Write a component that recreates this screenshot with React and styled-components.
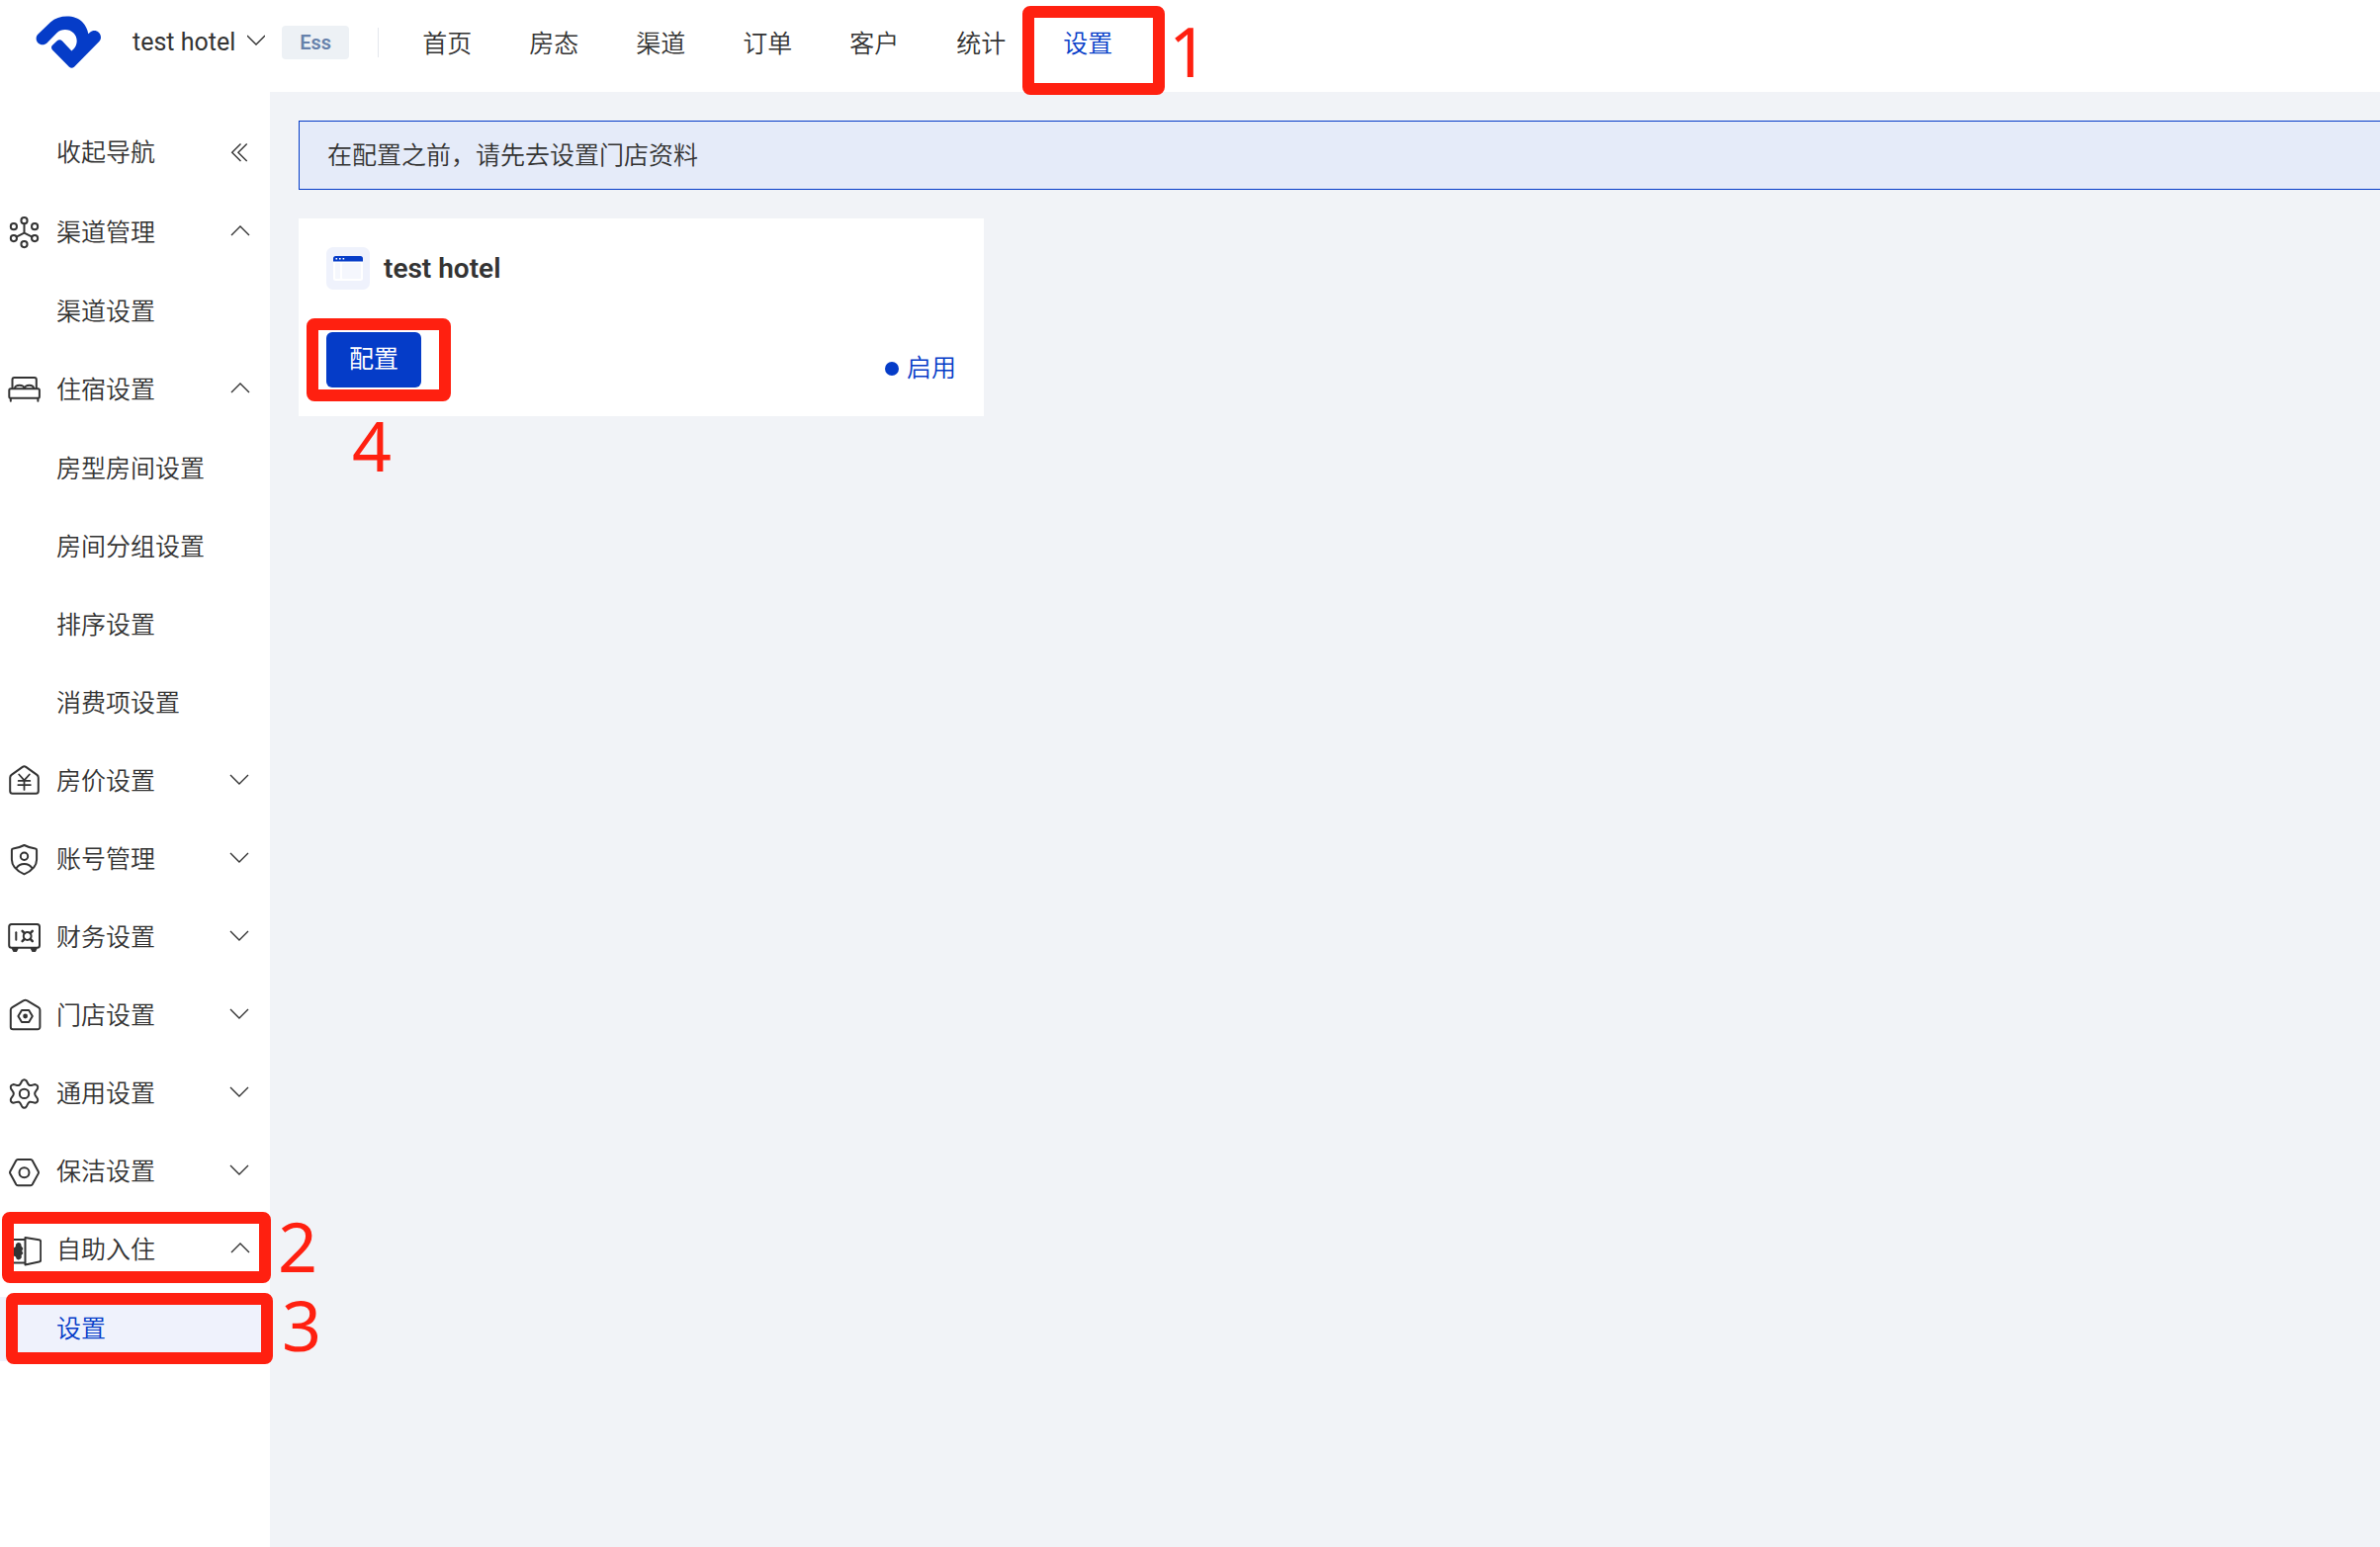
import React from "react";
import styled, { createGlobalStyle, css } from "styled-components";

const colors = {
  blue: "#053cc8",
  text: "#333333",
  red: "#ff2010",
  page: "#f1f3f7",
  active: "#eff2fc",
};

const GlobalStyle = createGlobalStyle`
  *, *::before, *::after {
    box-sizing: border-box;
  }

  body {
    margin: 0;
    background: ${colors.page};
    color: ${colors.text};
    font-family: Roboto, "Noto Sans CJK SC", sans-serif;
    font-size: 25px;
    font-weight: 400;
    line-height: 38px;
  }

  button {
    padding: 0;
    border: 0;
    background: none;
    color: inherit;
    font: inherit;
    cursor: pointer;
  }

  a {
    color: inherit;
    text-decoration: none;
  }

  svg {
    display: block;
    flex: none;
  }
`;

const Page = styled.div`
  position: relative;
  display: flex;
  flex-direction: column;
  min-height: 100vh;
  overflow-x: hidden;
`;

const Header = styled.header`
  display: flex;
  align-items: center;
  height: 93px;
  padding: 0 36px 8px;
  background: #fff;
`;

const HotelSelect = styled.button`
  display: flex;
  align-items: center;
  gap: 12px;
  margin-left: 32px;
  white-space: nowrap;
`;

const Badge = styled.span`
  margin-left: 17px;
  padding: 0 18px;
  border-radius: 4px;
  background: #edf1f5;
  color: #6681ab;
  font-size: 20px;
  font-weight: 600;
  line-height: 34px;
`;

const Divider = styled.span`
  width: 1px;
  height: 30px;
  margin: 0 44px 0 29px;
  background: #e4e7ec;
`;

const TopNav = styled.nav`
  display: flex;
  gap: 58px;
  padding-top: 4px;
`;

const TopLink = styled.a`
  color: ${(props) => (props.$active ? colors.blue : colors.text)};
  font-weight: 350;
  white-space: nowrap;
`;

const Body = styled.div`
  display: flex;
  flex: 1;
`;

const Sidebar = styled.nav`
  flex: none;
  width: 273px;
  padding-top: 29px;
  background: #fff;
  font-weight: 350;
`;

const rowStyle = css`
  display: flex;
  align-items: center;
  width: 100%;
  height: 65px;
  padding-right: 19px;
  text-align: left;
  white-space: nowrap;
`;

const CollapseRow = styled.button`
  ${rowStyle}
  justify-content: space-between;
  margin-bottom: 16px;
  padding-left: 57px;
`;

const Menu = styled.ul`
  display: flex;
  flex-direction: column;
  gap: 14px;
  margin: 0;
  padding: 0;
  list-style: none;
`;

const SubMenu = styled(Menu)`
  padding-top: 15px;
`;

const GroupRow = styled.button`
  ${rowStyle}
  gap: 15px;
  padding-left: 6px;
`;

const GroupLabel = styled.span`
  flex: 1;
`;

const SubLink = styled.a`
  ${rowStyle}
  padding-left: 57px;
  background: ${(props) => (props.$active ? colors.active : "transparent")};
  color: ${(props) => (props.$active ? colors.blue : colors.text)};
`;

const Main = styled.main`
  flex: 1;
  min-width: 0;
  padding: 29px 0 29px 29px;
`;

const Notice = styled.p`
  margin: 0 0 29px;
  padding: 16px 28px 14px;
  border: 1px solid ${colors.blue};
  border-right: 0;
  background: #e5ebf9;
  font-weight: 350;
`;

const CardGrid = styled.div`
  display: grid;
  grid-template-columns: repeat(3, 1fr);
  gap: 13px;
`;

const Card = styled.article`
  display: flex;
  flex-direction: column;
  justify-content: space-between;
  height: 200px;
  padding: 29px 28px;
  background: #fff;
`;

const CardHead = styled.div`
  display: flex;
  align-items: center;
  gap: 14px;
`;

const CardIcon = styled.span`
  display: grid;
  place-items: center;
  width: 44px;
  height: 43px;
  border-radius: 7px;
  background: ${colors.active};
`;

const CardTitle = styled.h2`
  margin: 0;
  font-size: 28px;
  font-weight: 600;
`;

const CardFoot = styled.div`
  display: flex;
  align-items: flex-end;
  justify-content: space-between;
`;

const ConfigButton = styled.button`
  && {
    height: 56px;
    padding: 0 23px;
    border-radius: 6px;
    background: ${colors.blue};
    color: #fff;
  }
`;

const Status = styled.span`
  display: flex;
  align-items: center;
  gap: 8px;
  color: ${colors.blue};
  font-weight: 350;

  &::before {
    width: 14px;
    height: 14px;
    border-radius: 50%;
    background: ${colors.blue};
    content: "";
  }
`;

// Red frames and step numbers lie on top of the page
const Frame = styled.div`
  position: absolute;
  top: ${(props) => props.$top}px;
  left: ${(props) => props.$left}px;
  width: ${(props) => props.$width}px;
  height: ${(props) => props.$height}px;
  border: 12px solid ${colors.red};
  border-radius: 8px;
  pointer-events: none;
`;

const Step = styled.span`
  position: absolute;
  top: ${(props) => props.$top}px;
  left: ${(props) => props.$left}px;
  color: ${colors.red};
  font-family: "Noto Sans", "Open Sans", sans-serif;
  font-size: 70px;
  line-height: 70px;
  pointer-events: none;
`;

const Logo = () => (
  <svg width="66" height="54" viewBox="36 15 66 54" fill={colors.blue} aria-hidden="true">
    <path d="M38.5 33.5 51 21.5C60 13.5 76 13.8 83.5 21.5C86.5 24.5 88.6 29 89.3 33.3L91 31.7C93.5 29.5 97.5 29.5 100 32C102.5 34.5 102.7 38.5 100.3 41L75 66.7Q72.5 69 70 66.7L53 49.5Q51 47 53 44.8L57.5 40.4Q60.5 38 63 40.5L72.4 50.5 74.5 48.5C79 43.5 78.5 36.5 74.5 32.5C70 28 62 28 57.5 32.3L47.5 42.4C45 44.8 41 44.8 38.5 42.4C36 40 36 36 38.5 33.5Z" />
  </svg>
);

const Chevron = ({ up = false, width = 24 }) => (
  <svg
    width={width}
    height="24"
    viewBox={width === 24 ? "0 0 24 24" : "3 0 18 24"}
    fill="none"
    stroke={colors.text}
    strokeWidth="1.4"
    aria-hidden="true"
  >
    <path d={up ? "M4 14 13 5l9 9" : "M3 5l9 9 9-9"} />
  </svg>
);

const DoubleLeft = () => (
  <svg width="24" height="24" viewBox="0 0 24 24" fill="none" stroke={colors.text} strokeWidth="1.4" aria-hidden="true">
    <path d="M13.5 2.5 4.7 11.3l8.8 8.8M19.7 2.5 10.9 11.3l8.8 8.8" />
  </svg>
);

const MenuIcon = ({ children }) => (
  <svg
    width="36"
    height="36"
    viewBox="0 0 36 36"
    fill="none"
    stroke={colors.text}
    strokeWidth="2"
    strokeLinecap="round"
    strokeLinejoin="round"
    aria-hidden="true"
  >
    {children}
  </svg>
);

const icons = {
  channel: (
    <>
      <circle cx="18.5" cy="5.2" r="3.1" />
      <circle cx="7.9" cy="11.2" r="3.1" />
      <circle cx="29.1" cy="11.2" r="3.1" />
      <circle cx="7.9" cy="23.1" r="3.1" />
      <circle cx="29.1" cy="23.1" r="3.1" />
      <circle cx="18.5" cy="29.1" r="3.1" />
      <path d="M18.5 8.3V17.7M10.6 21.6 18.5 17.7l7.9 3.9" />
    </>
  ),
  bed: (
    <>
      <path d="M6.5 15.5V7a2 2 0 0 1 2-2h20.3a2 2 0 0 1 2 2V15.5" />
      <rect x="3.3" y="16.3" width="30.6" height="9.4" rx="1.5" />
      <path d="M4.8 26v2.8M32.4 26v2.8" />
      <path d="M9 15.5c.4-2 1.8-2.7 4.7-2.7s4.3.7 4.7 2.7M19 15.5c.4-2 1.8-2.7 4.7-2.7s4 .7 4.4 2.7" />
    </>
  ),
  price: (
    <>
      <path d="M16.8 2.9 5.6 10.9a3.5 3.5 0 0 0-1.4 2.8v13.5a2.5 2.5 0 0 0 2.5 2.5h23.6a2.5 2.5 0 0 0 2.5-2.5V13.7a3.5 3.5 0 0 0-1.4-2.8L20.2 2.9a3 3 0 0 0-3.4 0Z" />
      <path d="m13.2 10.5 5.3 5.8 5.3-5.8M12.7 16.9h11.6M12.3 21.1h12.6M18.5 16.5v9.4" strokeWidth="1.8" />
    </>
  ),
  account: (
    <>
      <path d="M18.5 3c4 2.1 8 3.1 11.2 3.5a1.6 1.6 0 0 1 1.4 1.6v9.4c0 6-4.5 11.3-12.6 14.8C10.4 28.8 5.9 23.5 5.9 17.5V8.1a1.6 1.6 0 0 1 1.4-1.6C10.5 6.1 14.5 5.1 18.5 3Z" />
      <circle cx="18.5" cy="14.3" r="3.7" />
      <path d="M10.5 26.3c1.7-3 4.5-4.4 8-4.4s6.3 1.4 8 4.4" />
    </>
  ),
  finance: (
    <>
      <rect x="3.2" y="4" width="30.8" height="23.8" rx="2.5" />
      <path d="M6.8 28.5h4.8l-1.3 2.6H8.1ZM25.8 28.5h4.8l-1.3 2.6h-2.2Z" fill={colors.text} />
      <path d="M10.3 12.3v7.4" />
      <circle cx="21.7" cy="16" r="3.9" />
      <path d="m16.6 10.9 2.2 2.2M26.8 10.9l-2.2 2.2M16.6 21.1l2.2-2.2M26.8 21.1l-2.2-2.2" strokeWidth="2.5" />
    </>
  ),
  store: (
    <>
      <path d="M18 2.2 6.3 9.1A3 3 0 0 0 4.8 11.7v17.3a2.3 2.3 0 0 0 2.3 2.3h25a2.3 2.3 0 0 0 2.3-2.3V11.7a3 3 0 0 0-1.5-2.6L21.2 2.2a3 3 0 0 0-3.2 0Z" />
      <path d="M16 12h7.2l3.6 6-3.6 6H16l-3.6-6Z" />
      <circle cx="19.6" cy="18" r="1.4" fill={colors.text} />
    </>
  ),
  general: (
    <>
      <path d="M16.2 4.5Q18.5 2 20.8 4.5C22 6.5 22 8.2 24 9C26 9.6 27.6 8 29.7 8.1Q33 9 32 12.2C31 14.2 29.2 15.2 29.2 17.4C29.2 19.6 31 20.6 32 22.6Q33 25.8 29.7 26.7C27.6 26.8 26 25.2 24 25.8C22 26.6 22 28.3 20.8 30.3Q18.5 33.3 16.2 30.3C15 28.3 15 26.6 13 25.8C11 25.2 9.4 26.8 7.3 26.7Q4 25.8 5 22.6C6 20.6 7.8 19.6 7.8 17.4C7.8 15.2 6 14.2 5 12.2Q4 9 7.3 8.1C9.4 8 11 9.6 13 9C15 8.2 15 6.5 16.2 4.5Z" />
      <circle cx="18.5" cy="17.4" r="4.7" />
    </>
  ),
  cleaning: (
    <>
      <path d="M12 5h13a2 2 0 0 1 1.7 1l6.1 11.2a2 2 0 0 1 0 1.9l-6.1 11.2a2 2 0 0 1-1.7 1H12a2 2 0 0 1-1.7-1L4.2 19.1a2 2 0 0 1 0-1.9L10.3 6a2 2 0 0 1 1.7-1Z" />
      <circle cx="18.5" cy="18.2" r="5" />
    </>
  ),
  checkin: (
    <>
      <path d="M18.5 7H6v23.5h12.5" />
      <path d="m19.5 5 14 2.2a2 2 0 0 1 1.7 2v18.4a2 2 0 0 1-1.7 2l-14 2.9Z" />
      <path
        d="M12.5 10a3.2 3.2 0 0 1 3 3.5l1.9 2.5-1.2 2.5 1.2 2.500-1.900 2a3.200 3.200 0 0 1-3 4.500 3 3 0 0 1-2.500-3l-3-1.500v-7l3-2a3 3 0 0 1 2.500-4Z"
        fill={colors.text}
        stroke="none"
      />
    </>
  ),
};

const topNav = ["首页", "房态", "渠道", "订单", "客户", "统计", "设置"];

const menu = [
  { icon: "channel", label: "渠道管理", items: ["渠道设置"] },
  {
    icon: "bed",
    label: "住宿设置",
    items: ["房型房间设置", "房间分组设置", "排序设置", "消费项设置"],
  },
  { icon: "price", label: "房价设置" },
  { icon: "account", label: "账号管理" },
  { icon: "finance", label: "财务设置" },
  { icon: "store", label: "门店设置" },
  { icon: "general", label: "通用设置" },
  { icon: "cleaning", label: "保洁设置" },
  { icon: "checkin", label: "自助入住", items: ["设置"] },
];

const MenuGroup = ({ group }) => {
  const open = Boolean(group.items);
  return (
    <li>
      <GroupRow type="button" aria-expanded={open}>
        <MenuIcon>{icons[group.icon]}</MenuIcon>
        <GroupLabel>{group.label}</GroupLabel>
        <Chevron up={open} />
      </GroupRow>
      {open && (
        <SubMenu>
          {group.items.map((item) => (
            <li key={item}>
              <SubLink href="#" $active={item === "设置"}>
                {item}
              </SubLink>
            </li>
          ))}
        </SubMenu>
      )}
    </li>
  );
};

const HotelCard = ({ name }) => (
  <Card>
    <CardHead>
      <CardIcon>
        <svg width="30" height="25" viewBox="0 0 30 25" aria-hidden="true">
          <rect width="30" height="25" rx="2.5" fill="#fff" />
          <rect x="2" y="7" width="5" height="16" rx="1" fill="#f5f7fd" />
          <rect x="9" y="7" width="19" height="16" rx="1" fill="#f5f7fd" />
          <path d="M0 5.5V2.5A2.5 2.5 0 0 1 2.5 0h25A2.5 2.5 0 0 1 30 2.5v3Z" fill={colors.blue} />
          <path d="M2.5 2h1.6v1.6H2.5zM6 2h1.6v1.6H6zM9.6 2h1.6v1.6H9.6z" fill="#fff" />
        </svg>
      </CardIcon>
      <CardTitle>{name}</CardTitle>
    </CardHead>
    <CardFoot>
      <ConfigButton type="button">配置</ConfigButton>
      <Status>启用</Status>
    </CardFoot>
  </Card>
);

const App = () => {
  return (
    <Page>
      <GlobalStyle />
      <Header>
        <Logo />
        <HotelSelect type="button">
          test hotel
          <Chevron width={18} />
        </HotelSelect>
        <Badge>Ess</Badge>
        <Divider />
        <TopNav>
          {topNav.map((label) => (
            <TopLink key={label} href="#" $active={label === "设置"}>
              {label}
            </TopLink>
          ))}
        </TopNav>
      </Header>
      <Body>
        <Sidebar>
          <CollapseRow type="button">
            收起导航
            <DoubleLeft />
          </CollapseRow>
          <Menu>
            {menu.map((group) => (
              <MenuGroup key={group.label} group={group} />
            ))}
          </Menu>
        </Sidebar>
        <Main>
          <Notice>在配置之前，请先去设置门店资料</Notice>
          <CardGrid>
            <HotelCard name="test hotel" />
          </CardGrid>
        </Main>
      </Body>

      <Frame $top={6} $left={1034} $width={144} $height={90} />
      <Step $top={16} $left={1182}>1</Step>
      <Frame $top={1226} $left={2} $width={272} $height={72} />
      <Step $top={1225} $left={281}>2</Step>
      <Frame $top={1308} $left={6} $width={270} $height={72} />
      <Step $top={1305} $left={285}>3</Step>
      <Frame $top={322} $left={310} $width={146} $height={84} />
      <Step $top={415} $left={356}>4</Step>
    </Page>
  );
};

export default App;
